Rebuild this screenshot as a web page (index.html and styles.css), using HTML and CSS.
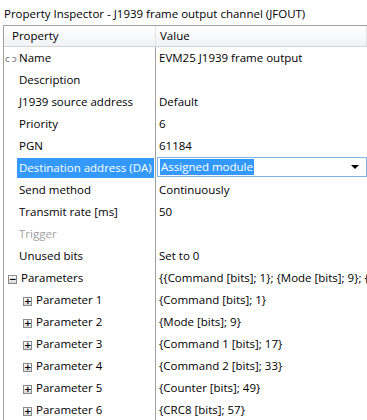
FILE: index.html
```html
<!DOCTYPE html>
<html lang="en">
<head>
    <meta charset="UTF-8">
    <title>Property Inspector</title>
    <link rel="stylesheet" href="styles.css">
</head>
<body>
    <div class="title">Property Inspector - J1939 frame output channel (JFOUT)</div>
    <div class="grid">
        <div class="head">
            <div class="hcell">Property</div>
            <div class="hcell">Value</div>
        </div>
        <div class="row">
            <div class="name"><span class="link">c&thinsp;&#x254;</span>Name</div>
            <div class="value">EVM25 J1939 frame output</div>
        </div>
        <div class="row">
            <div class="name">Description</div>
            <div class="value"></div>
        </div>
        <div class="row">
            <div class="name">J1939 source address</div>
            <div class="value">Default</div>
        </div>
        <div class="row">
            <div class="name">Priority</div>
            <div class="value">6</div>
        </div>
        <div class="row">
            <div class="name">PGN</div>
            <div class="value">61184</div>
        </div>
        <div class="row">
            <div class="name"><span class="sel">Destination address (DA)</span></div>
            <div class="value edit">
                <div class="combo"><span class="sel">Assigned module</span><span class="arrow"></span></div>
            </div>
        </div>
        <div class="row">
            <div class="name">Send method</div>
            <div class="value">Continuously</div>
        </div>
        <div class="row">
            <div class="name">Transmit rate [ms]</div>
            <div class="value">50</div>
        </div>
        <div class="row">
            <div class="name disabled">Trigger</div>
            <div class="value"></div>
        </div>
        <div class="row">
            <div class="name">Unused bits</div>
            <div class="value">Set to 0</div>
        </div>
        <div class="row">
            <div class="name tree"><span class="box">&minus;</span>Parameters</div>
            <div class="value">{{Command [bits]; 1}; {Mode [bits]; 9}; {</div>
        </div>
        <div class="row">
            <div class="name sub"><span class="box">+</span>Parameter 1</div>
            <div class="value">{Command [bits]; 1}</div>
        </div>
        <div class="row">
            <div class="name sub"><span class="box">+</span>Parameter 2</div>
            <div class="value">{Mode [bits]; 9}</div>
        </div>
        <div class="row">
            <div class="name sub"><span class="box">+</span>Parameter 3</div>
            <div class="value">{Command 1 [bits]; 17}</div>
        </div>
        <div class="row">
            <div class="name sub"><span class="box">+</span>Parameter 4</div>
            <div class="value">{Command 2 [bits]; 33}</div>
        </div>
        <div class="row">
            <div class="name sub"><span class="box">+</span>Parameter 5</div>
            <div class="value">{Counter [bits]; 49}</div>
        </div>
        <div class="row">
            <div class="name sub"><span class="box">+</span>Parameter 6</div>
            <div class="value">{CRC8 [bits]; 57}</div>
        </div>
    </div>
</body>
</html>
```

FILE: styles.css
```css
body {
    margin: 0;
    background: #fff;
    font-family: "Open Sans", sans-serif;
    font-size: 11.5px;
    color: #000;
    overflow: hidden;
}
.title {
    height: 25px;
    line-height: 28px;
    padding-left: 4px;
    white-space: nowrap;
}
.grid {
    margin-left: 3px;
    width: 363px;
    border-left: 1px solid #a0a0a0;
    border-right: 1px solid #a0a0a0;
    border-top: 1px solid #a0a0a0;
}
.head {
    display: grid;
    grid-template-columns: 152px 1fr;
    height: 20px;
    background: linear-gradient(#ffffff, #f1f2f4);
    border-bottom: 1px solid #d5d5d5;
}
.hcell {
    line-height: 20px;
    padding-left: 8px;
    border-right: 1px solid #e3e4e6;
}
.hcell + .hcell {
    padding-left: 4px;
}
.row {
    display: grid;
    grid-template-columns: 152px 1fr;
    height: 22px;
}
.name {
    line-height: 21px;
    padding-left: 15px;
    border-right: 1px solid #a0a0a0;
    white-space: nowrap;
    overflow: hidden;
}
.value {
    line-height: 21px;
    padding-left: 3px;
    white-space: nowrap;
    overflow: hidden;
}
.disabled {
    color: #a0a0a0;
}
.link {
    display: inline-block;
    width: 14px;
    margin-left: -14px;
    font-size: 9px;
    color: #707070;
    font-family: "DejaVu Sans", sans-serif;
}
.sel {
    background: #3399ff;
    color: #fff;
    padding: 2px 2px 3px;
    margin-left: -2px;
}
.edit {
    padding: 0 0 0 1px;
}
.combo {
    display: flex;
    align-items: center;
    height: 18px;
    border: 1px solid #7eb4ea;
    padding-left: 2px;
}
.combo .sel {
    padding: 0 1px;
    margin-left: 0;
    line-height: 16px;
}
.arrow {
    margin-left: auto;
    margin-right: 7px;
    border-left: 4px solid transparent;
    border-right: 4px solid transparent;
    border-top: 4px solid #000;
}
.tree {
    padding-left: 4px;
}
.sub {
    padding-left: 19px;
}
.box {
    display: inline-block;
    width: 7px;
    height: 7px;
    border: 1px solid #8a8a8a;
    background: linear-gradient(#ffffff, #d8d8d8);
    font-size: 9px;
    line-height: 7px;
    text-align: center;
    font-weight: bold;
    margin-right: 4px;
    vertical-align: 0;
    font-family: "DejaVu Sans", sans-serif;
}
```
